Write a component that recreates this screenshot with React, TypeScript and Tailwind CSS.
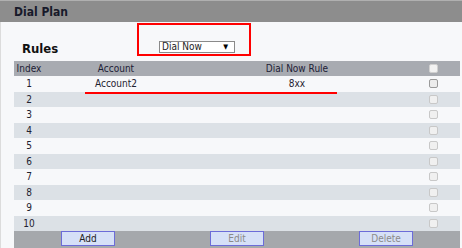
const rows = ["1", "2", "3", "4", "5", "6", "7", "8", "9", "10"];

const Checkbox = ({ enabled }: { enabled?: boolean }) => (
  <div
    className={`w-[9px] h-[9px] rounded-[2px] border ${
      enabled ? "border-[#9a9a9a] bg-[#ececec]" : "border-[#c8c8c8] bg-[#f0f0f0]"
    }`}
  />
);

const App = () => {
  return (
    <div
      className="w-[462px] h-[248px] overflow-hidden bg-[#f7f8fa] text-[#1e2230]"
      style={{ fontFamily: '"DejaVu Sans Condensed", "Liberation Sans", sans-serif' }}
    >
      {/* Header */}
      <div className="h-[22px] bg-[#8d8d8d] border-t border-[#b0b0b0] pl-[14px] flex items-center">
        <span className="text-[12px] font-bold text-[#17192a]">Dial Plan</span>
      </div>

      <div className="border-l border-[#dcdcdc] h-[226px]">
        {/* Top */}
        <div className="h-[39px] flex items-start">
          <div className="w-[115px] ml-[21px] mt-[19px] text-[13px] leading-[16px] font-bold text-[#111]">Rules</div>
          <div className="mt-[1px] w-[114px] h-[33px] border-2 border-[#ff0000] pl-[20px] pt-[16px]">
            <div className="w-[76px] h-[12px] border border-[#8a8a8a] bg-white flex items-center justify-between px-[2px]">
              <span className="text-[10px] leading-none text-[#222]">Dial Now</span>
              <span className="text-[7px] leading-none text-black mr-[4px]">▼</span>
            </div>
          </div>
        </div>

        {/* Table */}
        <div className="ml-[13px] w-[446px] text-[10px]">
          <div className="h-[15px] bg-[#a8abb1] flex items-center text-[#1c2035]">
            <div className="w-[30px] text-center">Index</div>
            <div className="w-[144px] text-center">Account</div>
            <div className="w-[218px] text-center">Dial Now Rule</div>
            <div className="w-[54px] flex justify-center">
              <div className="w-[9px] h-[9px] rounded-[2px] border border-[#d0d0d0] bg-[#f2f2f2]" />
            </div>
          </div>
          {rows.map((r, i) => (
            <div
              key={r}
              className={`relative h-[15.5px] flex items-center ${
                i % 2 === 0 ? "bg-[#f7f8fa]" : "bg-[#dce1e6]"
              }`}
            >
              <div className="w-[30px] text-center">{r}</div>
              <div className="w-[144px] text-center">{i === 0 ? "Account2" : ""}</div>
              <div className="w-[218px] text-center">{i === 0 ? "8xx" : ""}</div>
              <div className="w-[54px] flex justify-center">
                <Checkbox enabled={i === 0} />
              </div>
              {i === 0 && (
                <span className="absolute z-10 left-[71px] bottom-[-2px] w-[252px] h-[2px] bg-[#ff0000]" />
              )}
            </div>
          ))}
          {/* Footer */}
          <div className="h-[17px] bg-[#a5a8ac] flex items-start gap-[95px] pl-[47px]">
            <button className="w-[54px] h-[15px] border border-[#6c6cd8] bg-[#d6e0f7] text-[10px] leading-none text-[#222]">
              Add
            </button>
            <button className="w-[54px] h-[15px] border border-[#6c6cd8] bg-[#d6e0f7] text-[10px] leading-none text-[#8a8a8a]">
              Edit
            </button>
            <button className="w-[54px] h-[15px] border border-[#6c6cd8] bg-[#d6e0f7] text-[10px] leading-none text-[#8a8a8a]">
              Delete
            </button>
          </div>
        </div>
      </div>
    </div>
  );
};

export default App;
